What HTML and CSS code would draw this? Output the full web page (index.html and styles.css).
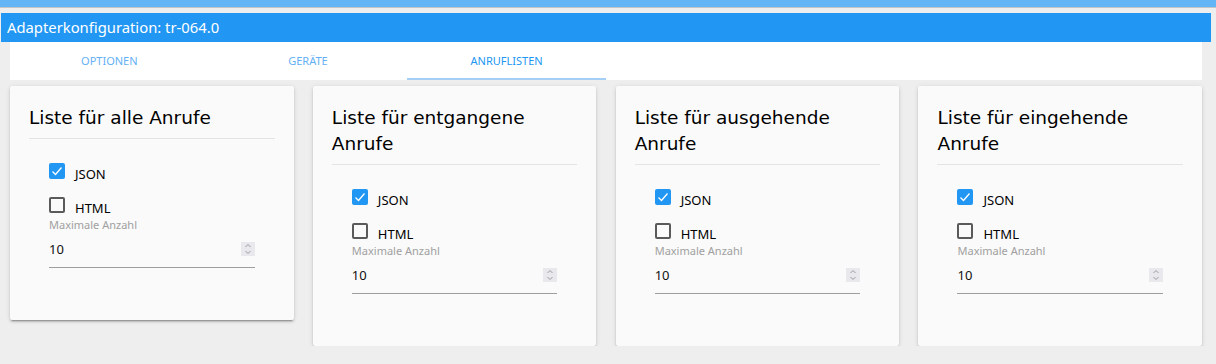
FILE: index.html
```html
<!DOCTYPE html>
<html lang="de">
<head>
  <meta charset="UTF-8" />
  <title>Adapterkonfiguration: tr-064.0</title>
  <link rel="stylesheet" href="styles.css">
</head>
<body>
  <div class="topbar"></div>
  <header>Adapterkonfiguration: tr-064.0</header>

  <!-- Tabs -->
  <nav class="tabs">
    <div class="tab">Optionen</div>
    <div class="tab">Geräte</div>
    <div class="tab active">Anruflisten</div>
  </nav>

  <div class="cards">
    <div class="card">
      <div class="card-title">Liste für alle Anrufe</div>
      <div class="card-body">
        <div class="check-row first">
          <span class="box checked"><svg viewBox="0 0 16 16" width="16" height="16"><polyline points="3.5,8.5 6.5,11.5 12.5,4.5" fill="none" stroke="#fff" stroke-width="1.3"/></svg></span>
          <span class="check-label">JSON</span>
        </div>
        <div class="check-row">
          <span class="box"></span>
          <span class="check-label">HTML</span>
        </div>
        <div class="field-label">Maximale Anzahl</div>
        <div class="num">
          <span>10</span>
          <span class="spin"><svg viewBox="0 0 14 14" width="14" height="14"><polyline points="4.5,5 7,2.5 9.5,5" fill="none" stroke="#9a9aa0" stroke-width="1"/><polyline points="4.5,9 7,11.5 9.5,9" fill="none" stroke="#9a9aa0" stroke-width="1"/></svg></span>
        </div>
      </div>
    </div>

    <div class="card">
      <div class="card-title">Liste für entgangene Anrufe</div>
      <div class="card-body">
        <div class="check-row first">
          <span class="box checked"><svg viewBox="0 0 16 16" width="16" height="16"><polyline points="3.5,8.5 6.5,11.5 12.5,4.5" fill="none" stroke="#fff" stroke-width="1.3"/></svg></span>
          <span class="check-label">JSON</span>
        </div>
        <div class="check-row">
          <span class="box"></span>
          <span class="check-label">HTML</span>
        </div>
        <div class="field-label">Maximale Anzahl</div>
        <div class="num">
          <span>10</span>
          <span class="spin"><svg viewBox="0 0 14 14" width="14" height="14"><polyline points="4.5,5 7,2.5 9.5,5" fill="none" stroke="#9a9aa0" stroke-width="1"/><polyline points="4.5,9 7,11.5 9.5,9" fill="none" stroke="#9a9aa0" stroke-width="1"/></svg></span>
        </div>
      </div>
    </div>

    <div class="card">
      <div class="card-title">Liste für ausgehende Anrufe</div>
      <div class="card-body">
        <div class="check-row first">
          <span class="box checked"><svg viewBox="0 0 16 16" width="16" height="16"><polyline points="3.5,8.5 6.5,11.5 12.5,4.5" fill="none" stroke="#fff" stroke-width="1.3"/></svg></span>
          <span class="check-label">JSON</span>
        </div>
        <div class="check-row">
          <span class="box"></span>
          <span class="check-label">HTML</span>
        </div>
        <div class="field-label">Maximale Anzahl</div>
        <div class="num">
          <span>10</span>
          <span class="spin"><svg viewBox="0 0 14 14" width="14" height="14"><polyline points="4.5,5 7,2.5 9.5,5" fill="none" stroke="#9a9aa0" stroke-width="1"/><polyline points="4.5,9 7,11.5 9.5,9" fill="none" stroke="#9a9aa0" stroke-width="1"/></svg></span>
        </div>
      </div>
    </div>

    <div class="card">
      <div class="card-title">Liste für eingehende Anrufe</div>
      <div class="card-body">
        <div class="check-row first">
          <span class="box checked"><svg viewBox="0 0 16 16" width="16" height="16"><polyline points="3.5,8.5 6.5,11.5 12.5,4.5" fill="none" stroke="#fff" stroke-width="1.3"/></svg></span>
          <span class="check-label">JSON</span>
        </div>
        <div class="check-row">
          <span class="box"></span>
          <span class="check-label">HTML</span>
        </div>
        <div class="field-label">Maximale Anzahl</div>
        <div class="num">
          <span>10</span>
          <span class="spin"><svg viewBox="0 0 14 14" width="14" height="14"><polyline points="4.5,5 7,2.5 9.5,5" fill="none" stroke="#9a9aa0" stroke-width="1"/><polyline points="4.5,9 7,11.5 9.5,9" fill="none" stroke="#9a9aa0" stroke-width="1"/></svg></span>
        </div>
      </div>
    </div>
  </div>
</body>
</html>
```

FILE: styles.css
```css
body {
  margin: 0;
  font-family: 'Noto Sans', sans-serif;
  background-color: #eeeeee;
  color: #111;
}

.topbar {
  height: 7px;
  background-color: #64b5f6;
  border-bottom: 1px solid #c4c4c4;
  margin-bottom: 5px;
}

header {
  margin: 0 5px 0 1px;
  height: 29px;
  line-height: 29px;
  padding-left: 6px;
  background-color: #2196f3;
  color: white;
  font-size: 14.8px;
}

.tabs {
  display: flex;
  height: 38px;
  margin: 0 14px 0 10px;
  background-color: white;
}

.tab {
  width: 198.67px;
  box-sizing: border-box;
  text-align: center;
  line-height: 38px;
  font-size: 11px;
  text-transform: uppercase;
  color: #64b0f4;
}

.tab.active {
  color: #2196f3;
  border-bottom: 2px solid #a5cff4;
}

.cards {
  display: grid;
  grid-template-columns: repeat(4, 1fr);
  column-gap: 19.33px;
  align-items: start;
  padding: 6px 14px 0 10px;
}

.card {
  background-color: #fafafa;
  border-radius: 2px;
  padding: 19px 19px 52px;
  box-shadow: 0 2px 2px rgba(0, 0, 0, 0.14), 0 1px 5px rgba(0, 0, 0, 0.12), 0 3px 1px -2px rgba(0, 0, 0, 0.2);
}

.card-title {
  font-family: 'DejaVu Sans', sans-serif;
  font-size: 18.5px;
  line-height: 26px;
  padding-bottom: 7px;
  border-bottom: 1px solid #e4e4e4;
  color: #000;
}

.card-body {
  padding: 0 20px;
}

.check-row {
  display: flex;
  align-items: flex-start;
  gap: 10px;
  margin-top: 15px;
  height: 19px;
}

.check-row.first {
  margin-top: 24px;
}

.box {
  width: 16px;
  height: 16px;
  box-sizing: border-box;
  border: 2px solid #5a5a5a;
  border-radius: 2px;
}

.box.checked {
  border: none;
  background-color: #2196f3;
}

.box svg {
  display: block;
}

.check-label {
  font-size: 13px;
  line-height: 16px;
  margin-top: 3px;
  color: #000;
}

.field-label {
  font-size: 11px;
  line-height: 13px;
  margin-top: 2px;
  color: #a0a0a0;
}

.num {
  display: flex;
  justify-content: space-between;
  align-items: center;
  height: 36px;
  border-bottom: 1px solid #9e9e9e;
  font-size: 13px;
}

.spin {
  width: 14px;
  height: 14px;
  background-color: #e9e9ed;
}

.spin svg {
  display: block;
}
```
